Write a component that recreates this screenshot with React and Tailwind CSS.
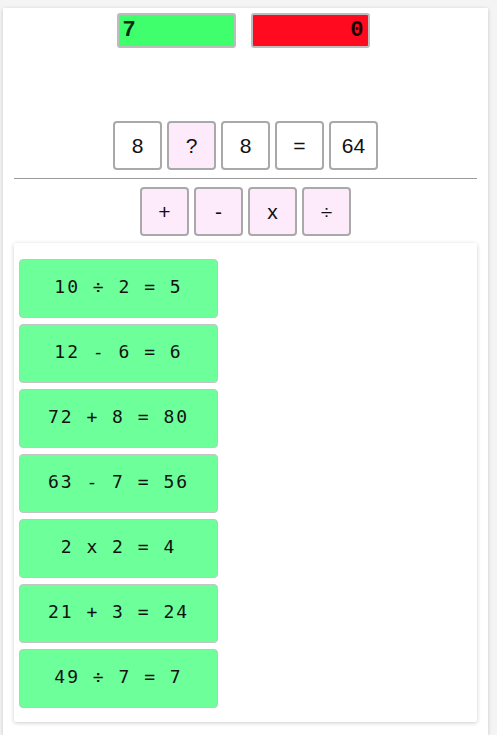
import React from 'react';

const PROBLEM = ['8', '?', '8', '=', '64'];
const OPERATORS = ['+', '-', 'x', '÷'];
const SOLVED = [
  '10 ÷ 2 = 5',
  '12 - 6 = 6',
  '72 + 8 = 80',
  '63 - 7 = 56',
  '2 x 2 = 4',
  '21 + 3 = 24',
  '49 ÷ 7 = 7',
];

function Tile({ children, pink }) {
  return (
    <div
      className={`w-[49px] h-[49px] flex items-center justify-center border-2 border-[#a9a9a9] rounded-[4px] text-[21px] text-[#111] ${
        pink ? 'bg-[#fdebfc]' : 'bg-white'
      }`}
    >
      {children}
    </div>
  );
}

export default function App() {
  return (
    <div className="min-h-screen bg-[#f4f4f4] pt-2 pl-[3px] pr-[9px] font-['Liberation_Sans',Arial,sans-serif]">
      <div className="bg-white shadow-[0_1px_4px_rgba(0,0,0,0.18)] px-[11px] pb-[13px]">
        {/* Scores */}
        <div className="pt-[5px] flex justify-center gap-[15px] pr-[5px]">
          <div className="w-[119px] h-[35px] bg-[#40ff6c] border-2 border-[#bdbdbd] rounded-[3px] flex items-center px-1 font-['Liberation_Mono',monospace] font-bold text-[22px] text-[#0c2a14]">
            7
          </div>
          <div className="w-[119px] h-[35px] bg-[#ff0a1e] border-2 border-[#bdbdbd] rounded-[3px] flex items-center justify-end px-[4px] font-['Liberation_Mono',monospace] font-bold text-[22px] text-[#1a0000]">
            0
          </div>
        </div>

        {/* Problem */}
        <div className="mt-[73px] flex justify-center gap-[5px]">
          {PROBLEM.map((p, i) => (
            <Tile key={i} pink={p === '?'}>{p}</Tile>
          ))}
        </div>

        <div className="mt-2 h-px bg-[#9a9a9a]" />

        {/* Operators */}
        <div className="mt-2 flex justify-center gap-[5px]">
          {OPERATORS.map(o => (
            <Tile key={o} pink>{o}</Tile>
          ))}
        </div>

        {/* Solved list */}
        <div className="mt-[7px] bg-white shadow-[0_1px_4px_rgba(0,0,0,0.2)] rounded-[2px] pt-4 pb-[14px] px-[5px] flex flex-col gap-[6px]">
          {SOLVED.map(s => (
            <div
              key={s}
              className="w-[199px] h-[59px] pb-[5px] bg-[#6dff9a] border border-[#c4c4c4] rounded-[4px] flex items-center justify-center font-['DejaVu_Sans_Mono',monospace] text-[18px] tracking-[2px] text-[#111] whitespace-pre"
            >
              {s}
            </div>
          ))}
        </div>
      </div>
    </div>
  );
}
